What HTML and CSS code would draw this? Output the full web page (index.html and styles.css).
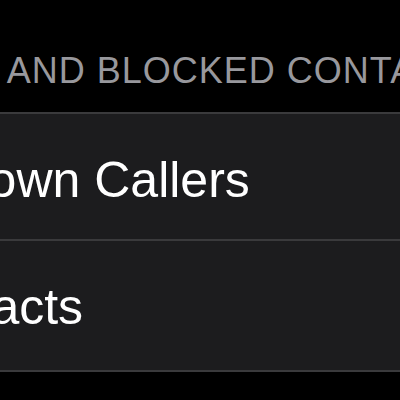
FILE: index.html
```html
<!DOCTYPE html>
<html lang="en">
<head>
    <meta charset="UTF-8">
    <meta name="viewport" content="width=device-width, initial-scale=1.0">
    <title>Phone</title>
    <link rel="stylesheet" href="styles.css">
</head>
<body>

    <div class="settings">
        <div class="section-header">CALL SILENCING AND BLOCKED CONTACTS</div>
        <div class="group">
            <div class="cell">Silence Unknown Callers</div>
            <div class="cell">Blocked Contacts</div>
        </div>
    </div>

</body>
</html>
```

FILE: styles.css
```css
body {
    margin: 0;
    background-color: #000;
    font-family: "Liberation Sans", Arial, sans-serif;
    overflow: hidden;
}

.settings {
    margin-left: -320px;
    width: 1000px;
}

.section-header {
    padding: 50px 0 20px 11px;
    font-size: 36px;
    line-height: 42px;
    letter-spacing: 1px;
    color: #98989d;
    white-space: nowrap;
}

.group {
    background-color: #1c1c1e;
    border-top: 2px solid #3a3a3c;
    border-bottom: 2px solid #3a3a3c;
}

.cell {
    padding: 37px 0 30px 14px;
    font-size: 50px;
    line-height: 58px;
    color: #fff;
    white-space: nowrap;
}

.cell + .cell {
    border-top: 2px solid #3a3a3c;
    padding-bottom: 34px;
}
```
